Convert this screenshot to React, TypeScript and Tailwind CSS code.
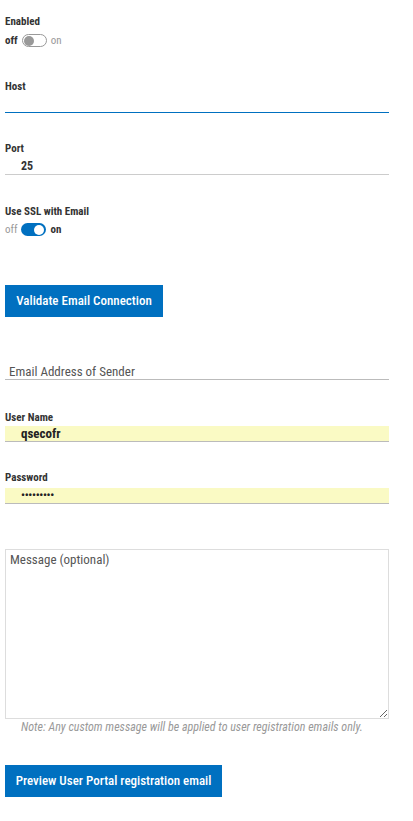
const font = "font-['Roboto_Condensed','Roboto',sans-serif]";

function Toggle({ on }: { on: boolean }) {
  return (
    <div className="flex items-center gap-[4px] text-[11px] leading-none">
      <span className={on ? "text-[#999]" : "font-bold text-[#333]"}>off</span>
      {on ? (
        <span className="flex h-[13px] w-[25px] items-center justify-end rounded-full bg-[#0070c0] px-[2px]">
          <span className="h-[10px] w-[10px] rounded-full bg-white" />
        </span>
      ) : (
        <span className="flex h-[13px] w-[25px] items-center rounded-full border border-[#999] bg-white px-[1px]">
          <span className="h-[10px] w-[10px] rounded-full bg-[#999]" />
        </span>
      )}
      <span className={on ? "font-bold text-[#333]" : "text-[#999]"}>on</span>
    </div>
  );
}

function Label({ children }: { children: React.ReactNode }) {
  return <div className="text-[11px] font-bold leading-[12px] text-[#333]">{children}</div>;
}

export default function App() {
  return (
    <div className={`${font} flex w-[413px] flex-col bg-white px-[5px] text-[#333]`}>
      <div className="mt-[16px]">
        <Label>Enabled</Label>
      </div>
      <div className="mt-[6px]">
        <Toggle on={false} />
      </div>

      <div className="mt-[34px]">
        <Label>Host</Label>
      </div>
      <div className="mt-[19px] h-px w-[384px] bg-[#0070c0]" />

      <div className="mt-[30px]">
        <Label>Port</Label>
      </div>
      <div className="mt-[3px] flex h-[17px] w-[384px] items-center border-b border-[#ccc] pl-[16px] text-[12px] font-bold leading-none text-[#333]">
        25
      </div>

      <div className="mt-[31px]">
        <Label>Use SSL with Email</Label>
      </div>
      <div className="mt-[5px]">
        <Toggle on={true} />
      </div>

      <button className="mt-[49px] h-[32px] w-[158px] bg-[#0070c0] font-['Roboto',sans-serif] font-stretch-condensed text-[13px] font-medium text-white">
        Validate Email Connection
      </button>

      <div className="mt-[48px] w-[384px] border-b border-[#bbb] pl-[4px] text-[13px] leading-[14px] text-[#555]">
        Email Address of Sender
      </div>

      <div className="mt-[32px]">
        <Label>User Name</Label>
      </div>
      <div className="mt-[2px] flex h-[16px] w-[384px] items-center border-b border-[#bbb] bg-[#fafac4] pl-[16px] text-[13px] font-bold leading-none text-[#222]">
        qsecofr
      </div>

      <div className="mt-[30px]">
        <Label>Password</Label>
      </div>
      <div className="mt-[4px] flex h-[16px] w-[384px] items-center border-b border-[#bbb] bg-[#fafac4] pl-[16px] text-[11px] font-bold leading-none tracking-[-0.3px] text-[#222]">
        •••••••••
      </div>

      <textarea
        className="mt-[45px] h-[170px] w-[384px] resize-y border border-[#ddd] px-[4px] pt-[2px] text-[13px] leading-[15px] text-[#333] outline-none placeholder:text-[#555]"
        placeholder="Message (optional)"
      />
      <div className="mt-[2px] pl-[16px] text-[12px] italic leading-[13px] text-[#999]">
        Note: Any custom message will be applied to user registration emails only.
      </div>

      <button className="mt-[31px] mb-[24px] h-[32px] w-[217px] bg-[#0070c0] font-['Roboto',sans-serif] font-stretch-condensed text-[13px] font-medium text-white">
        Preview User Portal registration email
      </button>
    </div>
  );
}
